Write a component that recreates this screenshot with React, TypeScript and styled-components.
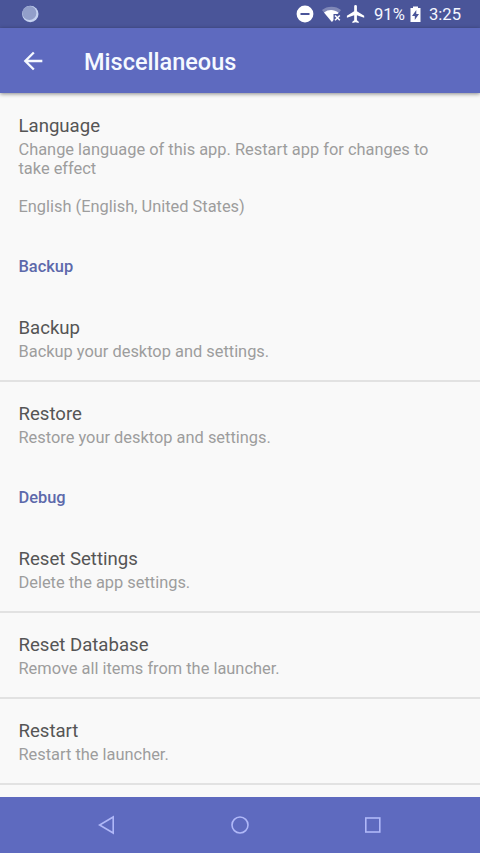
import React from "react";
import styled, { createGlobalStyle } from "styled-components";

const Global = createGlobalStyle`
  * { box-sizing: border-box; }
  body { margin: 0; background: #f9f9f9; font-family: Roboto, sans-serif; }
`;
const Screen = styled.div`
  width: 480px; height: 853px; display: flex; flex-direction: column;
  overflow: hidden; background: #f9f9f9;
`;
const StatusBar = styled.header`
  height: 28px; flex: none; display: flex; align-items: center;
  padding: 0 18px 0 22px; background: #4a5599; color: #f5f7ff;
`;
const StatusIcons = styled.div`
  margin-left: auto; display: flex; align-items: center; height: 28px;
`;
const StatusText = styled.span<{ $width: number; $gap: number }>`
  font-size: 16.6px; line-height: 28px; width: ${p => p.$width}px;
  margin-left: ${p => p.$gap}px; white-space: nowrap; padding-top: 1px;
`;
const Icon = styled.svg<{ $gap?: number }>`
  display: block; flex: none; margin-left: ${p => p.$gap ?? 0}px;
`;
const Toolbar = styled.div`
  height: 65px; flex: none; display: flex; align-items: center; padding-left: 19px;
  background: #5e6abf; color: #f5f9ff; box-shadow: 0 1px 4px rgba(0,0,0,.45); z-index: 1;
`;
const Title = styled.h1`
  margin: 2px 0 0 37px; font-size: 23.5px; line-height: 28px; font-weight: 500;
`;
const List = styled.main`
  flex: 1; min-height: 0; overflow: hidden; padding-top: 1px;
`;
const Preference = styled.section<{ $height: number; $divider?: boolean }>`
  height: ${p => p.$height}px; padding: 21px 18.5px 0;
  border-bottom: ${p => (p.$divider ? "2px solid #e2e2e2" : "0")};
`;
const Name = styled.h2`
  margin: 0; font-size: 18.6px; line-height: 23px; font-weight: 400; color: #555;
`;
const Summary = styled.p`
  margin: 2px 0 0; font-size: 16.4px; line-height: 19px; color: #9d9d9d; white-space: pre-line;
`;
const Category = styled.h3`
  margin: 0; height: 58px; padding: 19px 18.5px 0; font-size: 16.4px; line-height: 20px;
  font-weight: 500; color: #5d69ab;
`;
const NavBar = styled.nav`
  height: 56px; flex: none; display: flex; justify-content: center; align-items: center;
  gap: 109px; background: #5e6abf;
`;

export default function App() {
  return (
    <Screen>
      <Global />
      <StatusBar>
        <Icon width="18" height="18" viewBox="0 0 18 18">
          <circle cx="8.3" cy="9" r="8.2" fill="#c5d2f0" />
          <circle cx="7.4" cy="8" r="7" fill="#929fca" />
        </Icon>
        <StatusIcons>
          <Icon width="18" height="18" viewBox="0 0 18 18">
            <path fill="#fff" fillRule="evenodd" d="M9 .6a8.4 8.4 0 1 0 0 16.8A8.4 8.4 0 0 0 9 .6ZM4.5 8h9v2h-9Z" />
          </Icon>
          <Icon $gap={8} width="20" height="18" viewBox="0 0 20 18">
            <path fill="#fff" fillOpacity=".3" d="M0 5C5 .5 14 .5 19 5L16 9H11v5.8L9.5 17Z" />
            <path fill="#fff" d="M2 7.5C6.5 4.2 12 4.2 16.5 7.8L15.5 9H11.5v6L10 17Z" />
            <path d="m13 10.5 4.8 4.8m0-4.8L13 15.3" stroke="#fff" strokeWidth="1.6" />
          </Icon>
          <Icon $gap={4} width="20" height="20" viewBox="1 1 22 22">
            <path fill="#fff" d="M21 16v-2l-8-5V3.5a1.5 1.5 0 0 0-3 0V9l-8 5v2l8-2.5V19l-2 1.5V22l3.5-1 3.5 1v-1.5L13 19v-5.5z" />
          </Icon>
          <StatusText $width={33} $gap={8}>91%</StatusText>
          <Icon $gap={3} width="11" height="18" viewBox="0 0 11 18">
            <path fill="#fff" fillRule="evenodd" d="M3 1.5h5V3h2.5v14H.5V3H3ZM6.3 5 2 11h2.8v4L9 9H6.3Z" />
          </Icon>
          <StatusText $width={33} $gap={8}>3:25</StatusText>
        </StatusIcons>
      </StatusBar>
      <Toolbar>
        <Icon width="28" height="28" viewBox="0 0 24 24">
          <path fill="#f5f9ff" d="M20 11H7.83l5.59-5.59L12 4l-8 8 8 8 1.41-1.41L7.83 13H20z" />
        </Icon>
        <Title>Miscellaneous</Title>
      </Toolbar>
      <List>
        <Preference $height={144}>
          <Name>Language</Name>
          <Summary>{"Change language of this app. Restart app for changes to\ntake effect\n\nEnglish (English, United States)"}</Summary>
        </Preference>
        <Category>Backup</Category>
        <Preference $height={86} $divider><Name>Backup</Name><Summary>Backup your desktop and settings.</Summary></Preference>
        <Preference $height={87}><Name>Restore</Name><Summary>Restore your desktop and settings.</Summary></Preference>
        <Category>Debug</Category>
        <Preference $height={86} $divider><Name>Reset Settings</Name><Summary>Delete the app settings.</Summary></Preference>
        <Preference $height={86} $divider><Name>Reset Database</Name><Summary>Remove all items from the launcher.</Summary></Preference>
        <Preference $height={86} $divider><Name>Restart</Name><Summary>Restart the launcher.</Summary></Preference>
      </List>
      <NavBar>
        <Icon width="24" height="24" viewBox="0 0 24 24"><path d="M18.2 4v16L4.6 12Z" fill="none" stroke="#b0b8f8" strokeWidth="1.6" /></Icon>
        <Icon width="24" height="24" viewBox="0 0 24 24"><circle cx="12" cy="12" r="8" fill="none" stroke="#b0b8f8" strokeWidth="1.6" /></Icon>
        <Icon width="24" height="24" viewBox="0 0 24 24"><rect x="4.8" y="5" width="14" height="14" fill="none" stroke="#b0b8f8" strokeWidth="1.6" /></Icon>
      </NavBar>
    </Screen>
  );
}
